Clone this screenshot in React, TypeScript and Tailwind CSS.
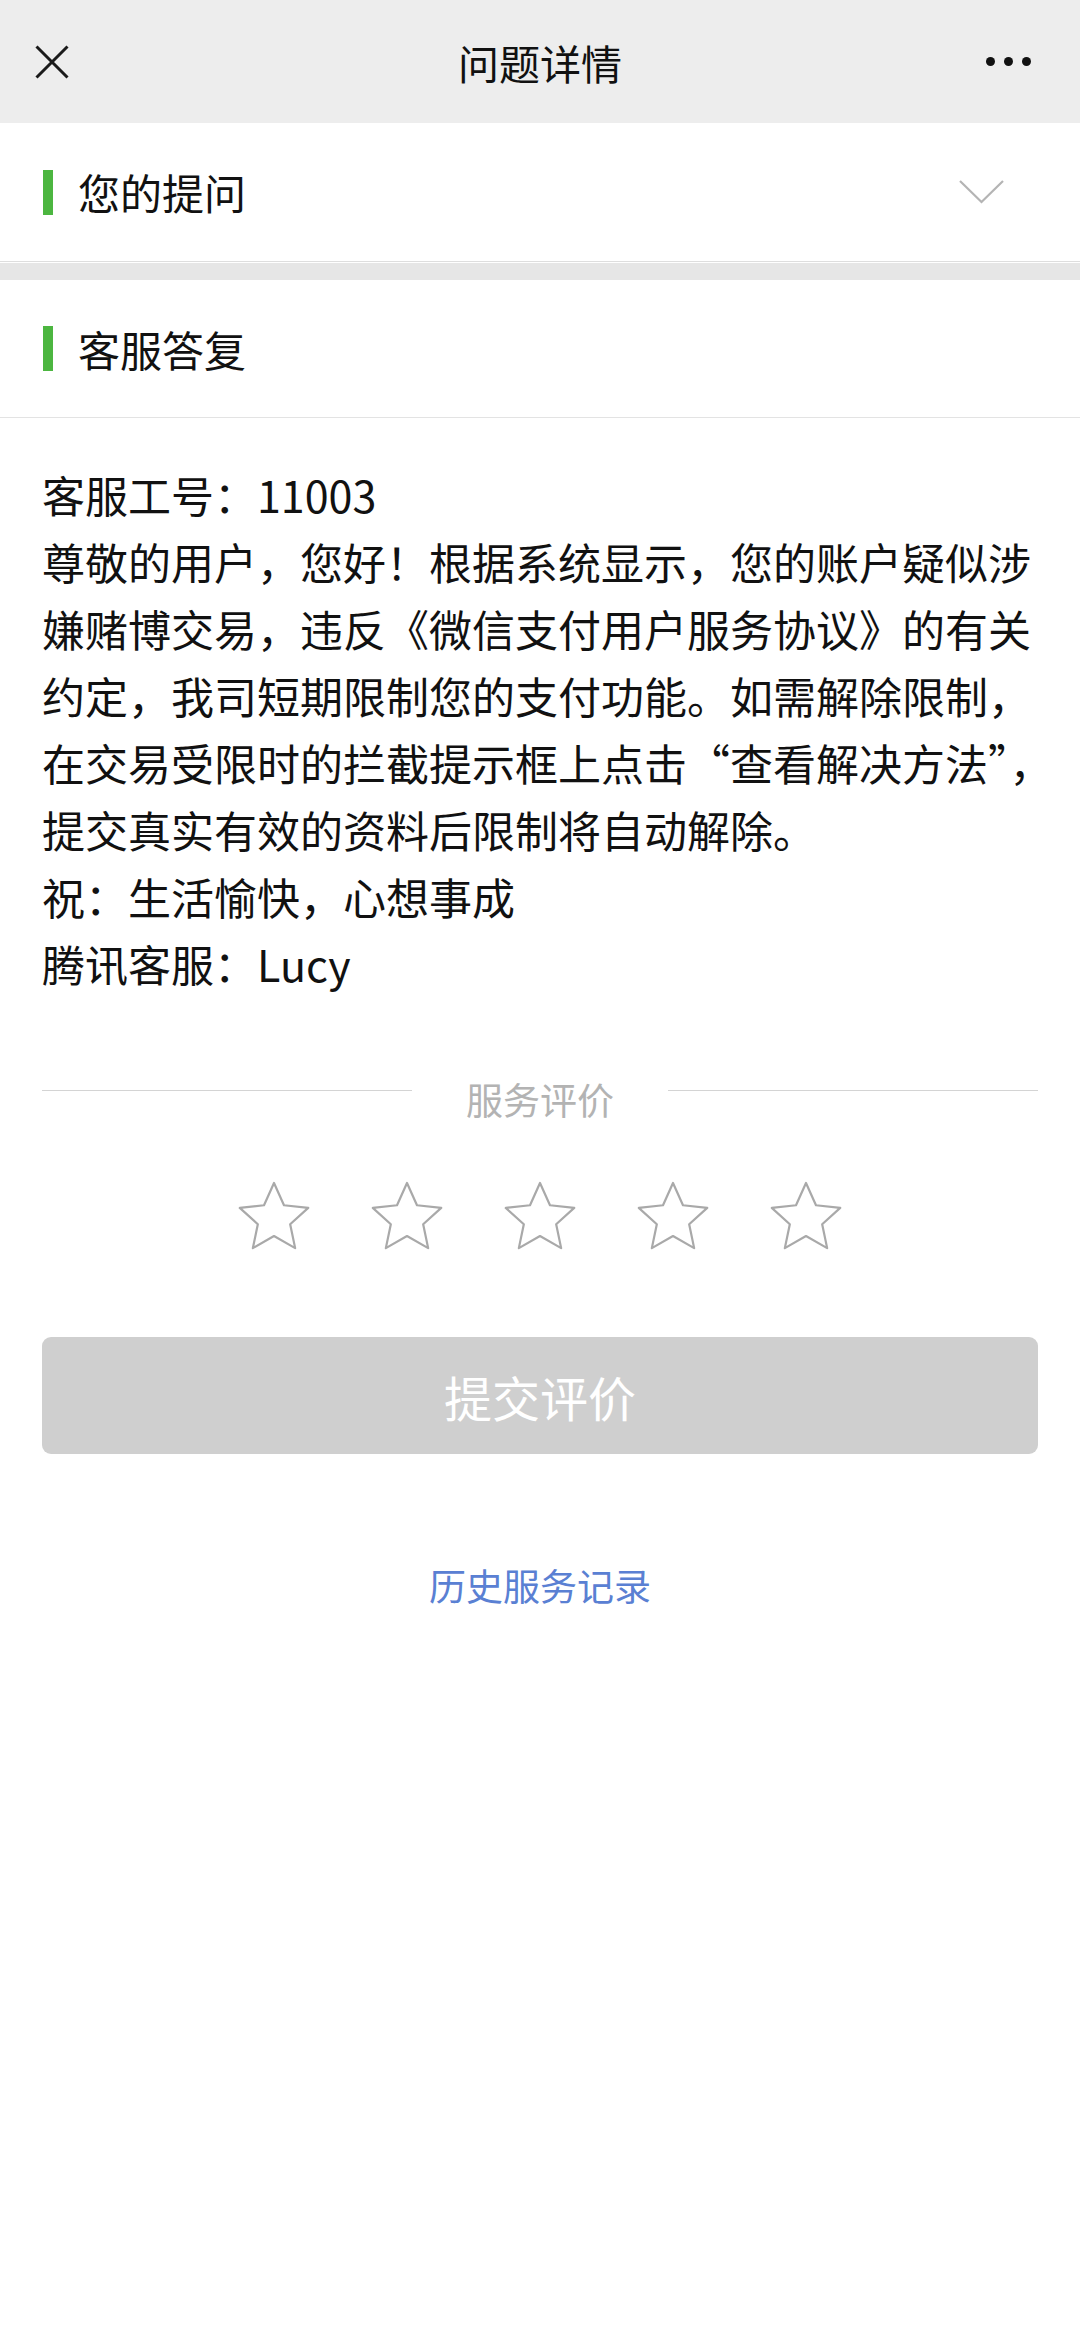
import React from "react";

const font = { fontFamily: '"Noto Sans CJK SC", "Noto Sans", sans-serif' };

// outlined rating star, drawn to match the reference's slim arms
function Star() {
  return (
    <svg width="72" height="70" viewBox="-1 -1 72 70" className="block">
      <polygon
        points="35,1 44.99,23.25 69.24,25.88 51.17,42.25 56.16,66.12 35,54 13.84,66.12 18.83,42.25 0.76,25.88 25.01,23.25"
        fill="none"
        stroke="#a9a9a9"
        strokeWidth="2.2"
        strokeLinejoin="round"
      />
    </svg>
  );
}

function SectionTitle({ title, collapsible }: { title: string; collapsible?: boolean }) {
  return (
    <div className="flex items-center justify-between bg-white pl-[43px] pr-[75px]">
      <div className="flex items-center">
        <div className="h-[45px] w-[10px] bg-[#4cb640]" />
        <span className="ml-[25px] text-[42px] leading-[56px] text-[#111]">{title}</span>
      </div>
      {collapsible && (
        <svg width="46" height="26" viewBox="0 0 46 26" className="block">
          <polyline points="1,2 22.5,23 44,2" fill="none" stroke="#b4b4b4" strokeWidth="2.2" />
        </svg>
      )}
    </div>
  );
}

const reply = [
  "客服工号：11003",
  "尊敬的用户，您好！根据系统显示，您的账户疑似涉",
  "嫌赌博交易，违反《微信支付用户服务协议》的有关",
  "约定，我司短期限制您的支付功能。如需解除限制，",
  "在交易受限时的拦截提示框上点击“查看解决方法”，",
  "提交真实有效的资料后限制将自动解除。",
  "祝：生活愉快，心想事成",
  "腾讯客服：Lucy",
];

export default function App() {
  return (
    <div className="min-h-[2327px] w-[1080px] bg-white" style={font}>
      {/* Top bar */}
      <div className="grid h-[123px] grid-cols-[1fr_auto_1fr] items-center bg-[#ededed] px-[35px]">
        <svg width="34" height="34" viewBox="0 0 34 34" className="block">
          <path d="M1.5 1.5 L32.5 32.5 M32.5 1.5 L1.5 32.5" stroke="#1a1a1a" strokeWidth="3" />
        </svg>
        <div className="text-[41px] leading-[50px] text-[#111]">问题详情</div>
        <div className="mr-[14px] flex items-center justify-end gap-[9px]">
          <span className="h-[9px] w-[9px] rounded-full bg-[#111]" />
          <span className="h-[9px] w-[9px] rounded-full bg-[#111]" />
          <span className="h-[9px] w-[9px] rounded-full bg-[#111]" />
        </div>
      </div>

      {/* Your question */}
      <div className="flex h-[139px] flex-col justify-center border-b border-[#dedede] bg-white">
        <SectionTitle title="您的提问" collapsible />
      </div>
      <div className="mt-px h-[17px] bg-[#e6e6e6]" />

      {/* Service reply */}
      <div className="flex h-[138px] flex-col justify-center border-b border-[#e3e3e3] bg-white">
        <SectionTitle title="客服答复" />
      </div>

      <div className="px-[42px] pt-[43px] text-[43px] leading-[67px] text-[#111]">
        {reply.map((line, i) => (
          <div key={i} className="whitespace-nowrap">
            {line}
          </div>
        ))}
      </div>

      {/* Rating */}
      <div className="mt-[82px] flex items-center px-[42px]">
        <div className="mb-[18px] h-px flex-1 bg-[#d4d4d4]" />
        <div className="mx-[54px] text-[37px] leading-[40px] text-[#b3b3b3]">服务评价</div>
        <div className="mb-[18px] h-px flex-1 bg-[#d4d4d4]" />
      </div>

      <div className="mt-[62px] flex justify-center gap-[61px]">
        {[0, 1, 2, 3, 4].map((i) => (
          <Star key={i} />
        ))}
      </div>

      <div className="mt-[86px] px-[42px]">
        <button className="flex h-[117px] w-full items-center justify-center rounded-[9px] bg-[#cfcfcf] text-[48px] leading-[60px] text-white">
          提交评价
        </button>
      </div>

      <div className="mt-[106px] text-center text-[37px] leading-[50px] text-[#5a80d3]">历史服务记录</div>
    </div>
  );
}
